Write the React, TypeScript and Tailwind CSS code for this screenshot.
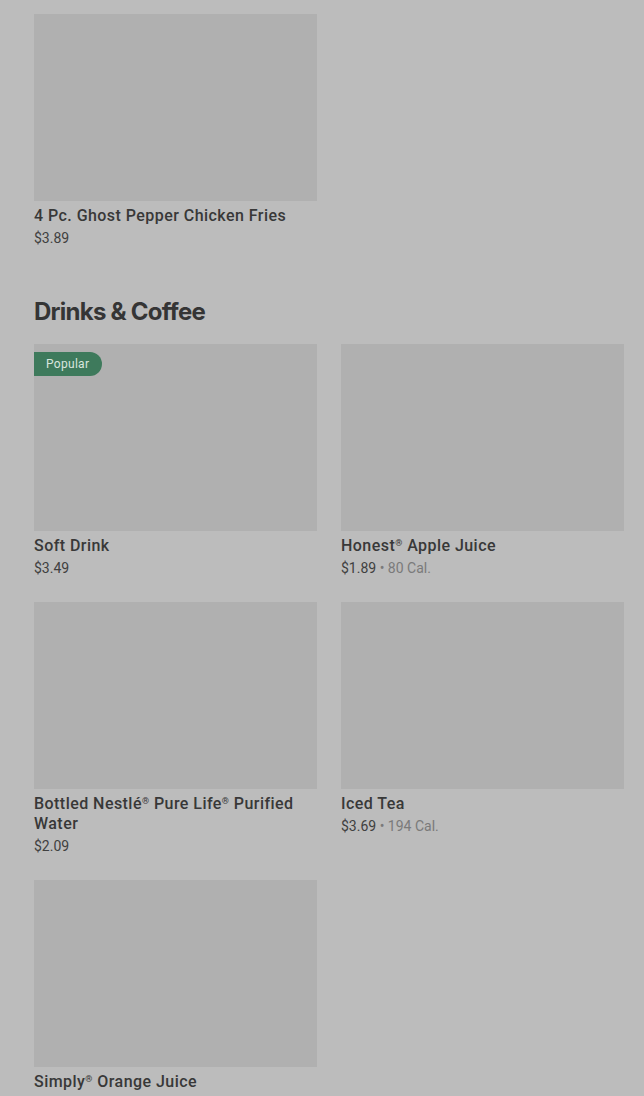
import React from "react";

type Item = { name: React.ReactNode; key: string; price: string; cal?: string; popular?: boolean };

const R = () => <span className="relative top-[-5px] text-[9px] leading-[0]">®</span>;

const Card = ({ item }: { item: Item }) => (
  <div className="flex flex-col">
    <div className="relative h-[187px] w-full bg-[#b0b0b0]">
      {item.popular && (
        <div className="absolute left-0 top-[8px] flex h-[24px] items-center rounded-r-full bg-[#3e7a5c] pl-[12px] pr-[13px] text-[12px] tracking-[0.3px] text-[#d9e6de]">
          Popular
        </div>
      )}
    </div>
    <div className="mt-[5px] text-[16px] font-medium leading-[20px] tracking-[0.45px] text-[#383838]">{item.name}</div>
    <div className="mt-[2px] text-[14px] leading-[20px] text-[#404040]">
      {item.price}
      {item.cal && <span className="text-[#7a7a7a]"> • {item.cal}</span>}
    </div>
  </div>
);

export default function App() {
  const drinks: Item[] = [
    { key: "soft", name: "Soft Drink", price: "$3.49", popular: true },
    { key: "apple", name: <>Honest<R /> Apple Juice</>, price: "$1.89", cal: "80 Cal." },
    { key: "water", name: <>Bottled Nestlé<R /> Pure Life<R /> Purified Water</>, price: "$2.09" },
    { key: "tea", name: "Iced Tea", price: "$3.69", cal: "194 Cal." },
    { key: "oj", name: <>Simply<R /> Orange Juice</>, price: "$3.49" },
  ];
  return (
    <div
      className="min-h-[1096px] w-[644px] overflow-hidden bg-[#bcbcbc] pl-[34px] pt-[14px]"
      style={{ fontFamily: "Roboto, 'Liberation Sans', sans-serif" }}
    >
      <div className="grid grid-cols-[283px_283px] gap-x-[24px]">
        <Card item={{ key: "fries", name: "4 Pc. Ghost Pepper Chicken Fries", price: "$3.89" }} />
      </div>
      <h2
        className="mt-[48px] mb-[16px] text-[24px] font-bold leading-[32px] tracking-[-0.75px] text-[#353535]"
        style={{ fontFamily: "Inter, 'Liberation Sans', sans-serif" }}
      >
        Drinks &amp; Coffee
      </h2>
      <div className="grid grid-cols-[283px_283px] gap-x-[24px] gap-y-[24px]">
        {drinks.map((d) => (
          <Card key={d.key} item={d} />
        ))}
      </div>
    </div>
  );
}
